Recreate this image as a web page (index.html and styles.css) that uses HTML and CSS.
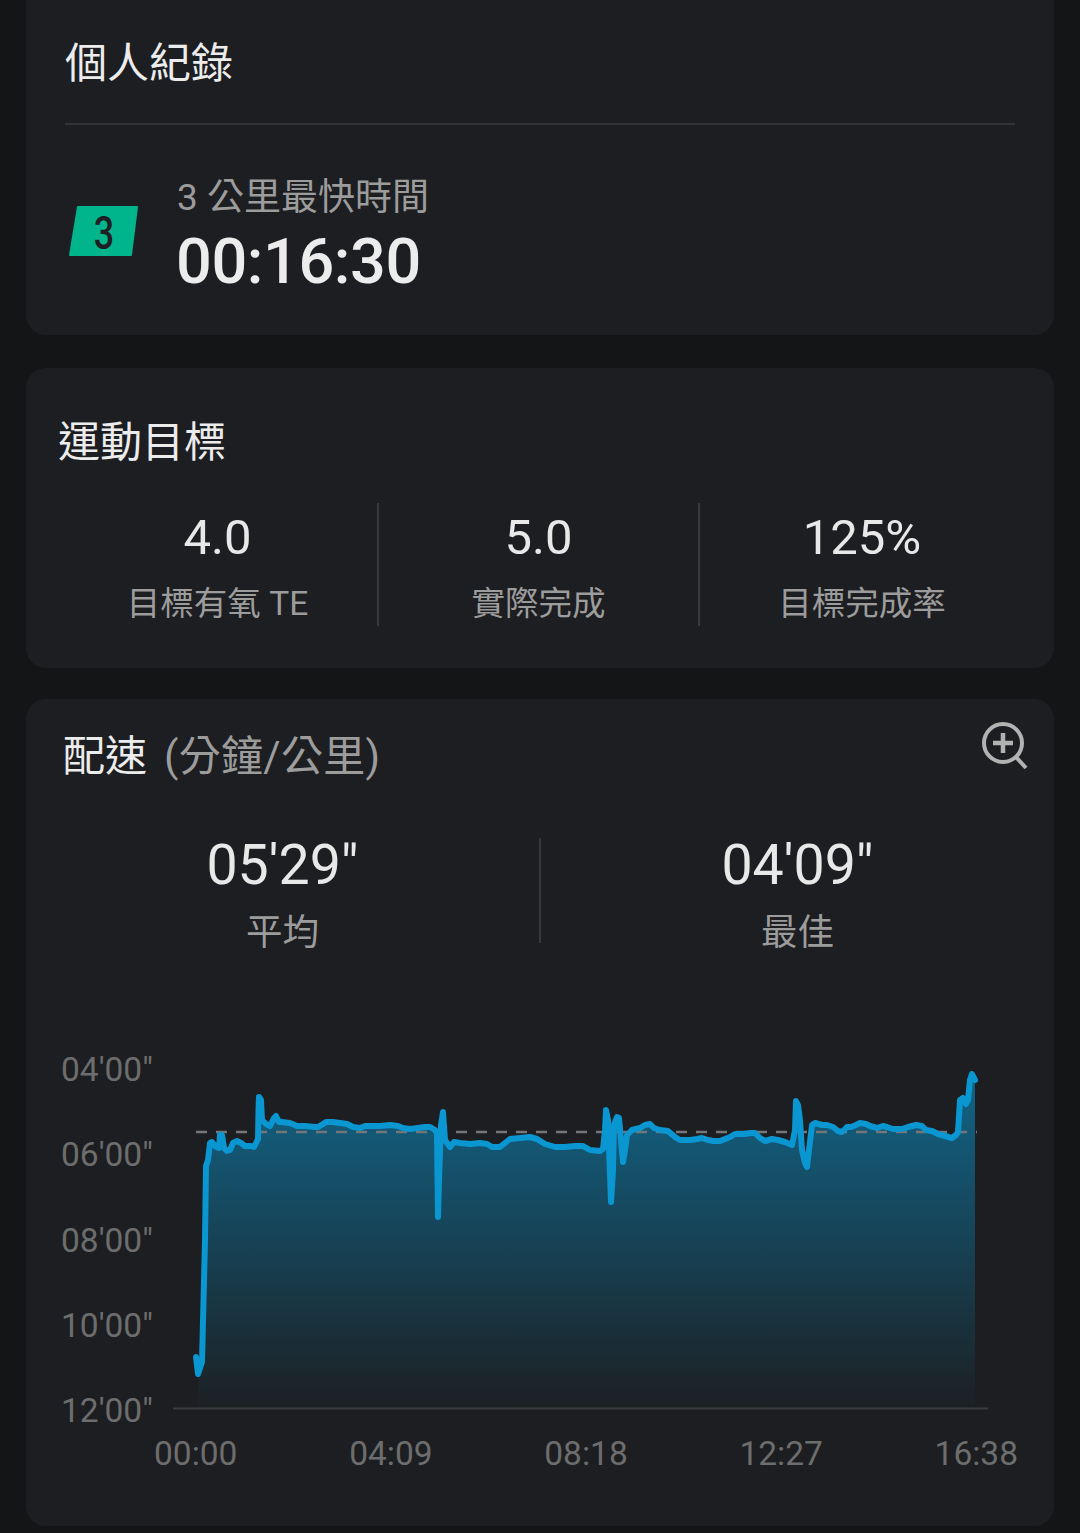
FILE: index.html
```html
<!DOCTYPE html>
<html lang="zh-Hant">
<head>
<meta charset="utf-8">
<title>運動紀錄</title>
<link rel="stylesheet" href="styles.css">
</head>
<body>
<main class="page">
  <section class="card records">
    <h2 class="title records-title">個人紀錄</h2>
    <div class="rule"></div>
    <div class="record">
      <svg class="badge" viewBox="0 0 70 50" width="70" height="50">
        <polygon points="9,1 68,1 62,49 1,49" fill="#00b48c" stroke="#00b48c" stroke-width="2" stroke-linejoin="round"/>
        <text class="badge-num" x="0" y="0" transform="translate(35 43) scale(.78 1)" text-anchor="middle">3</text>
      </svg>
      <div class="record-text">
        <div class="record-label">3 公里最快時間</div>
        <div class="record-value">00:16:30</div>
      </div>
    </div>
  </section>

  <section class="card goals">
    <h2 class="title goals-title">運動目標</h2>
    <div class="goal-row">
      <div class="stat goal"><div class="goal-value">4.0</div><div class="label goal-label">目標有氧 TE</div></div>
      <div class="stat goal"><div class="goal-value">5.0</div><div class="label goal-label">實際完成</div></div>
      <div class="stat goal"><div class="goal-value">125%</div><div class="label goal-label">目標完成率</div></div>
    </div>
  </section>

  <section class="card pace">
    <div class="pace-head">
      <h2 class="title pace-title">配速<span class="unit">(分鐘/公里)</span></h2>
      <svg class="zoom-icon" viewBox="0 0 48 50" width="48" height="50" fill="none" stroke="#b2b2b2">
        <circle cx="22" cy="21" r="19" stroke-width="4"/>
        <path d="M22 11v20M12 21h20" stroke-width="4.5"/>
        <path d="M35 35l10 11" stroke-width="4"/>
      </svg>
    </div>
    <div class="pace-stats">
      <div class="stat pace-stat"><div class="pace-value">05'29"</div><div class="label pace-label">平均</div></div>
      <div class="stat pace-stat"><div class="pace-value">04'09"</div><div class="label pace-label">最佳</div></div>
    </div>
    <div class="chart">
      <svg class="plot" viewBox="26 1049 1028 380" width="1028" height="380">
        <defs>
          <linearGradient id="area" x1="0" y1="1100" x2="0" y2="1408" gradientUnits="userSpaceOnUse">
            <stop offset="0" stop-color="#125f80"/>
            <stop offset="1" stop-color="#1c2023"/>
          </linearGradient>
        </defs>
        <polygon fill="url(#area)" points="198,1408 198,1374 202,1362 205,1240 206,1166 208,1160 210,1143 212,1142 216,1147 219,1148 220,1135 222,1135 224,1148 227,1151 230,1150 233,1143 237,1141 241,1143 245,1146 251,1146 254,1147 258,1139 258.5,1110 259,1097 261,1100 262,1120 266,1124 270,1126 274,1118 276,1116 279,1122 282,1122 290,1123 297,1126 305,1126 315,1127 318,1127 323,1124 326,1122 333,1122 340,1123 347,1124 353,1127 360,1128 365,1126 375,1126 380,1126 390,1125 398,1126 403,1128 410,1129 418,1128 425,1127 430,1127 435,1130 437,1134 438,1217 439,1180 441,1125 443,1112 445,1140 450,1147 454,1142 460,1143 470,1144 480,1143 487,1144 492,1147 500,1147 505,1143 510,1139 520,1138 530,1137 537,1139 545,1144 555,1147 565,1147 575,1146 583,1146 590,1150 600,1151 603,1149 605,1130 606,1110 608,1120 610,1175 611,1202 613,1170 614,1125 617,1117 619,1118 621,1140 623,1162 625,1150 627,1135 632,1130 640,1128 645,1125 650,1124 654,1128 660,1130 668,1131 675,1137 680,1140 690,1140 697,1139 702,1138 708,1140 713,1141 720,1141 725,1139 730,1137 735,1134 745,1134 750,1133 755,1133 760,1138 765,1141 772,1139 778,1140 785,1142 792,1145 795,1130 796,1101 798,1105 800,1120 802,1150 805,1163 807,1167 809,1150 812,1125 815,1123 822,1125 827,1125 833,1127 838,1131 842,1132 847,1127 851,1127 856,1125 860,1123 866,1124 870,1126 877,1128 883,1126 887,1127 893,1129 902,1129 908,1127 916,1125 922,1126 926,1130 932,1131 938,1134 945,1136 952,1138 956,1135 958,1132 960,1100 963,1098 966,1104 968,1100 970,1080 972,1074 975,1080 975,1408"/>
        <path class="avg" d="M196 1132H977"/>
        <path class="axis" d="M173 1408.500H988"/>
        <polyline class="line" points="196,1357 198,1374 202,1362 205,1240 206,1166 208,1160 210,1143 212,1142 216,1147 219,1148 220,1135 222,1135 224,1148 227,1151 230,1150 233,1143 237,1141 241,1143 245,1146 251,1146 254,1147 258,1139 258.500,1110 259,1097 261,1100 262,1120 266,1124 270,1126 274,1118 276,1116 279,1122 282,1122 290,1123 297,1126 305,1126 315,1127 318,1127 323,1124 326,1122 333,1122 340,1123 347,1124 353,1127 360,1128 365,1126 375,1126 380,1126 390,1125 398,1126 403,1128 410,1129 418,1128 425,1127 430,1127 435,1130 437,1134 438,1217 439,1180 441,1125 443,1112 445,1140 450,1147 454,1142 460,1143 470,1144 480,1143 487,1144 492,1147 500,1147 505,1143 510,1139 520,1138 530,1137 537,1139 545,1144 555,1147 565,1147 575,1146 583,1146 590,1150 600,1151 603,1149 605,1130 606,1110 608,1120 610,1175 611,1202 613,1170 614,1125 617,1117 619,1118 621,1140 623,1162 625,1150 627,1135 632,1130 640,1128 645,1125 650,1124 654,1128 660,1130 668,1131 675,1137 680,1140 690,1140 697,1139 702,1138 708,1140 713,1141 720,1141 725,1139 730,1137 735,1134 745,1134 750,1133 755,1133 760,1138 765,1141 772,1139 778,1140 785,1142 792,1145 795,1130 796,1101 798,1105 800,1120 802,1150 805,1163 807,1167 809,1150 812,1125 815,1123 822,1125 827,1125 833,1127 838,1131 842,1132 847,1127 851,1127 856,1125 860,1123 866,1124 870,1126 877,1128 883,1126 887,1127 893,1129 902,1129 908,1127 916,1125 922,1126 926,1130 932,1131 938,1134 945,1136 952,1138 956,1135 958,1132 960,1100 963,1098 966,1104 968,1100 970,1080 972,1074 975,1080"/>
      </svg>
      <div class="y-axis">
        <span>04'00"</span><span>06'00"</span><span>08'00"</span><span>10'00"</span><span>12'00"</span>
      </div>
      <div class="x-axis">
        <span>00:00</span><span>04:09</span><span>08:18</span><span>12:27</span><span>16:38</span>
      </div>
    </div>
  </section>
</main>
</body>
</html>
```
FILE: styles.css
```css
* { box-sizing: border-box; }
html, body { margin: 0; height: 1533px; overflow: hidden; }
body {
  background: #141516;
  color: #e8e8e8;
  font-family: Roboto, "Noto Sans CJK TC", sans-serif;
}
.page {
  display: flex;
  flex-direction: column;
  gap: 32px;
  padding: 0 26px;
  margin-top: -20px;
}
.card {
  background: #1c1e21;
  border-radius: 20px;
}
.title {
  margin: 0;
  font-size: 42px;
  font-weight: 400;
  line-height: 60px;
  color: #ececec;
  white-space: nowrap;
}
.label {
  color: #9c9c9c;
  white-space: nowrap;
}
.stat { text-align: center; }

.records {
  height: 355px;
  padding: 54px 39px 0;
}
.rule { height: 2px; background: #333436; margin-top: 29px; }
.record {
  display: flex;
  align-items: center;
  gap: 37px;
  margin-top: 49px;
  padding-left: 4px;
}
.badge { flex: none; margin-top: -10px; overflow: visible; }
.badge-num { font-family: Roboto, sans-serif; font-size: 46px; font-weight: 500; fill: #1c2023; }
.record-label { font-size: 37px; line-height: 48px; margin-left: 1px; color: #9c9c9c; white-space: nowrap; }
.record-value {
  font-size: 63px;
  font-weight: 500;
  line-height: 72px;
  letter-spacing: -.4px;
  margin-top: 4px;
  color: #ececec;
}

.goals { height: 300px; margin-top: 1px; padding: 45px 30px 0 32px; }
.goal-row {
  display: grid;
  grid-template-columns: 319px 321px 1fr;
  margin-top: 30px;
}
.goal { height: 123px; padding-top: 5px; }
.goal + .goal { border-left: 2px solid #38393b; }
.goal-value { font-size: 49px; line-height: 60px; }
.goal-label { font-size: 33.500px; line-height: 44px; margin-top: 14px; }

.pace { height: 827px; margin-top: -1px; padding-top: 28px; }
.pace-head {
  display: flex;
  justify-content: space-between;
  align-items: flex-start;
  padding: 0 25px 0 37px;
}
.unit { margin-left: 17px; color: #9c9c9c; letter-spacing: .3px; }
.zoom-icon { margin-top: -5px; }
.pace-stats {
  display: grid;
  grid-template-columns: 513px 1fr;
  margin-top: 51px;
}
.pace-stat { height: 105px; }
.pace-stat + .pace-stat { border-left: 2px solid #38393b; }
.pace-value { font-size: 55.500px; line-height: 60px; margin-top: -2px; }
.pace-label { font-size: 36.500px; line-height: 48px; margin-top: 13px; }

.chart {
  position: relative;
  margin-top: 107px;
  height: 440px;
  color: #6d6d6d;
  font-size: 33.500px;
  line-height: 40px;
}
.plot { position: absolute; left: 0; top: -1px; overflow: visible; }
.avg { stroke: #747678; stroke-width: 2.500; stroke-dasharray: 11 9; fill: none; }
.axis { stroke: #3a3b3d; stroke-width: 2; fill: none; }
.line {
  fill: none;
  stroke: #0a96d0;
  stroke-width: 6;
  stroke-linejoin: round;
  stroke-linecap: round;
  filter: blur(.5px);
}
.y-axis {
  display: flex;
  flex-direction: column;
  gap: 45.250px;
  padding-left: 35px;
}
.x-axis {
  display: flex;
  justify-content: space-between;
  padding: 0 36px 0 128px;
  margin-top: 3px;
}
```
